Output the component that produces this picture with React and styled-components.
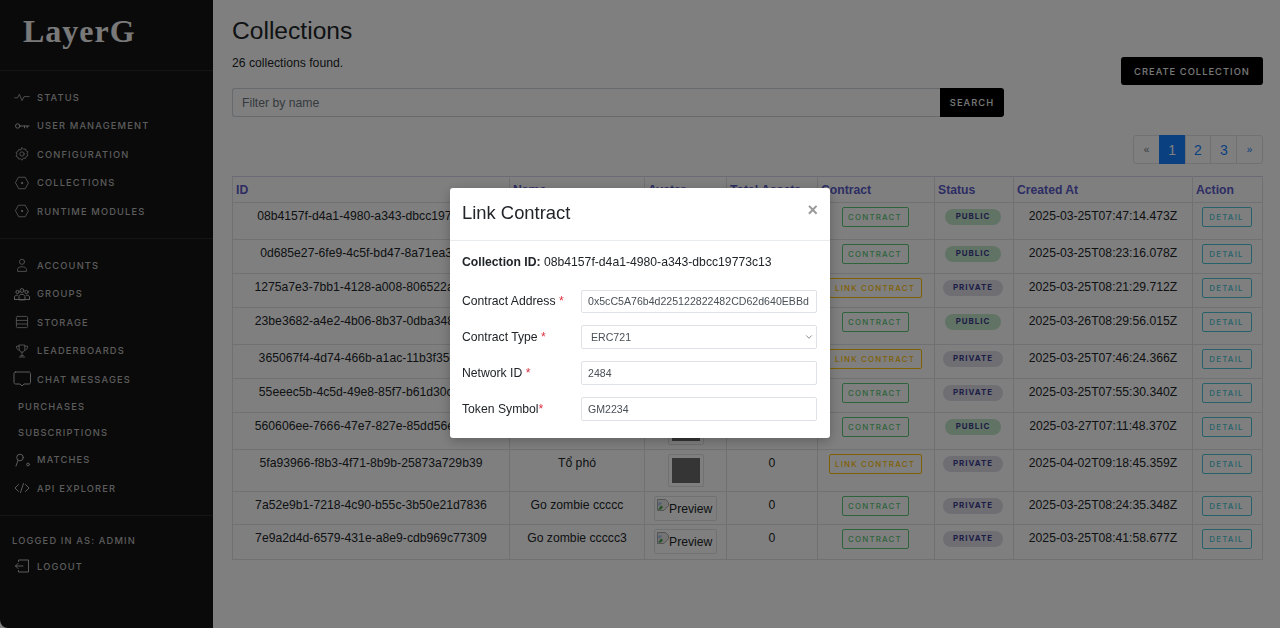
import React from 'react';
import styled, { createGlobalStyle } from 'styled-components';
import { ChevronDown } from 'lucide-react';

const Global = createGlobalStyle`
  html, body { margin: 0; padding: 0; height: 100%; background: #fff; overflow: hidden; }
  body { font-family: "Liberation Sans", Arial, sans-serif; color: #212529; font-size: 12.2px; }
  * { box-sizing: border-box; }
`;

const Shell = styled.div`
  display: flex;
  width: 1280px;
  height: 628px;
  overflow: hidden;
  background: #fff;
`;

const Sidebar = styled.aside`
  width: 213px;
  flex: none;
  background: #151515;
  color: #b8b8b8;
  display: flex;
  flex-direction: column;
  border-bottom-left-radius: 8px;
`;

const Brand = styled.div`
  height: 71px;
  padding: 13px 0 0 23px;
  border-bottom: 1px solid #2a2a2a;
  font-family: "Liberation Serif", serif;
  font-weight: 700;
  font-size: 32px;
  line-height: 36px;
  letter-spacing: 1px;
  color: #f2f2f2;
`;

const NavGroup = styled.nav`
  padding: 12px 0 12.5px;
  border-bottom: 1px solid #2a2a2a;
`;

const NavItem = styled.div`
  height: ${p => (p.$plain ? '26px' : '28.5px')};
  display: flex;
  align-items: center;
  padding-left: ${p => (p.$plain ? '18px' : '12.5px')};
  font-family: Inter, sans-serif;
  font-size: 9.3px;
  font-weight: 500;
  letter-spacing: 1.15px;
  white-space: nowrap;
`;

const NavIcon = styled.svg`
  width: 18px;
  height: 18px;
  margin-right: 6.5px;
  flex: none;
  fill: none;
  stroke: currentColor;
  stroke-width: 1;
  stroke-linecap: round;
  stroke-linejoin: round;
`;

const Footer = styled.div`
  padding-top: 12px;
`;

const LoggedIn = styled.div`
  height: 24px;
  display: flex;
  align-items: center;
  padding-left: 12px;
  font-family: Inter, sans-serif;
  font-size: 9.3px;
  font-weight: 500;
  letter-spacing: 1.15px;
`;

const Main = styled.main`
  flex: 1;
  padding: 0 18px 0 19px;
  background: #fff;
`;

const TopRow = styled.div`
  display: flex;
  justify-content: space-between;
  align-items: flex-start;
  height: 135px;
`;

const TopLeft = styled.div`
  width: 772px;
  padding-top: 16px;
`;

const Title = styled.h1`
  margin: 0;
  font-size: 24.6px;
  font-weight: 400;
  line-height: 30px;
`;

const Count = styled.p`
  margin: 9px 0 0;
  font-size: 12.2px;
  line-height: 16px;
`;

const SearchRow = styled.div`
  display: flex;
  margin-top: 17px;
  height: 29px;
`;

const FilterInput = styled.input`
  flex: 1;
  min-width: 0;
  border: 1px solid #ced4da;
  border-right: 0;
  border-radius: 3px 0 0 3px;
  padding: 0 9px;
  font: 12.2px "Liberation Sans", Arial, sans-serif;
  background: #fff;
  &::placeholder { color: #6c757d; opacity: 1; }
`;

const DarkButton = styled.button`
  border: 0;
  background: #000;
  color: #f0f0f0;
  font-family: Inter, sans-serif;
  font-size: 9.3px;
  font-weight: 500;
  letter-spacing: 1.05px;
  padding: 0;
  white-space: nowrap;
`;

const SearchButton = styled(DarkButton)`
  width: 64px;
  border-radius: 0 3px 3px 0;
`;

const CreateButton = styled(DarkButton)`
  width: 142px;
  height: 28px;
  margin-top: 57px;
  border-radius: 3px;
`;

const PagerRow = styled.div`
  display: flex;
  justify-content: flex-end;
  height: 41px;
`;

const Pager = styled.ul`
  display: flex;
  list-style: none;
  margin: 0;
  padding: 0;
  height: 29px;
`;

const PageCell = styled.li`
  width: 26.8px;
  display: flex;
  align-items: center;
  justify-content: center;
  border: 1px solid ${p => (p.$active ? '#1480ff' : '#dee2e6')};
  margin-left: -1px;
  background: ${p => (p.$active ? '#1480ff' : '#fff')};
  color: ${p => (p.$active ? '#fff' : p.$muted ? '#6c757d' : '#1480ff')};
  font-size: ${p => (p.$small ? '10px' : '14px')};
  &:first-child { border-radius: 3px 0 0 3px; margin-left: 0; }
  &:last-child { border-radius: 0 3px 3px 0; }
`;

const Table = styled.table`
  width: 1030px;
  table-layout: fixed;
  border-collapse: collapse;
  font-size: 12.2px;
`;

const Th = styled.th`
  border: 1px solid #dee2e6;
  border-top-color: #d6d6ee;
  height: 26px;
  padding: 0 3px;
  text-align: left;
  font-weight: 700;
  color: #5a5ac8;
  line-height: 14px;
`;

const Td = styled.td`
  border: 1px solid #dee2e6;
  padding: 6px 4px 0;
  vertical-align: top;
  text-align: center;
  line-height: 15px;
  white-space: nowrap;
  overflow: hidden;
`;

const ActionCell = styled(Td)`
  padding: 4px 5px 0 3px;
`;

const Outline = styled.button`
  display: block;
  margin: 0 auto;
  height: 19.5px;
  width: ${p => p.$w}px;
  padding: 0;
  background: transparent;
  border: 1px solid ${p => p.$c};
  border-radius: 2px;
  color: ${p => p.$c};
  font-family: Inter, sans-serif;
  font-size: 7.9px;
  font-weight: 500;
  letter-spacing: 1.2px;
  white-space: nowrap;
`;

const Badge = styled.span`
  display: block;
  margin: 2px auto 0;
  height: 15.5px;
  line-height: 15.5px;
  width: ${p => (p.$public ? '56px' : '60px')};
  border-radius: 8px;
  background: ${p => (p.$public ? '#c3e6cb' : '#dcdde6')};
  color: #3a3a8c;
  font-family: Inter, sans-serif;
  font-size: 7.9px;
  font-weight: 700;
  letter-spacing: 1px;
  text-align: center;
`;

const Thumb = styled.div`
  display: block;
  width: 36px;
  height: ${p => p.$h}px;
  padding: 3px;
  border: 1px solid #dee2e6;
  border-radius: 2px;
  margin: -2px auto 0;
`;

const ThumbFill = styled.div`
  width: 100%;
  height: 100%;
  background: #6a6a6a;
`;

const Broken = styled.div`
  display: flex;
  align-items: flex-start;
  width: 63px;
  height: 25px;
  padding: 2px;
  border: 1px solid #dee2e6;
  border-radius: 2px;
  margin: -2px auto 0;
  font-size: 12.2px;
  line-height: 20px;
`;

const Overlay = styled.div`
  position: fixed;
  inset: 0;
  background: rgba(0, 0, 0, 0.5);
`;

const Modal = styled.div`
  position: fixed;
  left: 450px;
  top: 188px;
  width: 380px;
  height: 250px;
  background: #fff;
  border-radius: 3px;
  box-shadow: 0 3px 12px rgba(0, 0, 0, 0.25);
`;

const ModalHead = styled.div`
  height: 52.5px;
  padding: 0 12px;
  border-bottom: 1px solid #e9ecef;
  display: flex;
  justify-content: space-between;
  align-items: flex-start;
`;

const ModalTitle = styled.h2`
  margin: 13px 0 0;
  font-size: 18.4px;
  line-height: 24px;
  font-weight: 400;
  color: #212529;
`;

const Close = styled.span`
  margin-top: 10px;
  font-size: 18px;
  line-height: 24px;
  font-weight: 700;
  color: #9a9a9a;
`;

const ModalBody = styled.div`
  padding: 13px 12px 0;
`;

const IdLine = styled.div`
  line-height: 16px;
  margin-bottom: 20px;
  b { font-weight: 700; }
`;

const FormRow = styled.div`
  display: grid;
  grid-template-columns: 119px 236px;
  align-items: center;
  height: 23.5px;
  margin-bottom: 12.4px;
`;

const Label = styled.label`
  font-size: 12.2px;
  color: #212529;
`;

const Req = styled.span`
  color: #dc3545;
`;

const Field = styled.input`
  width: 236px;
  height: 23.5px;
  border: 1px solid #dee2e6;
  border-radius: 2px;
  padding: 0 6px;
  color: #495057;
  background: #fff;
  font: 10.6px "Liberation Sans", Arial, sans-serif;
  outline: none;
`;

const SelectWrap = styled.div`
  position: relative;
  width: 236px;
  color: #6c757d;
  svg { position: absolute; right: 3px; top: 6.5px; }
`;

const SelectField = styled.select`
  display: block;
  width: 236px;
  height: 23.5px;
  appearance: none;
  border: 1px solid #dee2e6;
  border-radius: 2px;
  padding: 0 9px;
  background: #fff;
  color: #495057;
  font: 10.6px "Liberation Sans", Arial, sans-serif;
`;

const small = 'translate(1.8 1.8) scale(.8)';

const icons = {
  status: <g transform={small}><path d="M0 10h3.500l2.200-4.500 3.300 8 2.500-5h6.500" /></g>,
  key: <><circle cx="4.700" cy="9" r="2.200" /><path d="M6.900 9h9.100M11.500 9v1.800M14.200 9v1.800" /></>,
  gear: <g transform={small}><path d="M9 1.200l1.800 1.900 2.500-.4.800 2.400 2.300 1.100-1 2.400 1 2.400-2.300 1.100-.8 2.400-2.500-.4L9 16.800l-1.800-1.900-2.500.4-.8-2.400-2.300-1.100 1-2.400-1-2.400 2.300-1.100.8-2.400 2.500.4z" /><circle cx="9" cy="9" r="2.700" /></g>,
  hex: <g transform={small}><path d="M5 1.800h8L17 9l-4 7.200H5L1 9z" /><circle cx="9" cy="9" r=".8" fill="currentColor" /></g>,
  user: <g transform={small}><circle cx="9" cy="5" r="3.200" /><path d="M3.500 16.500v-2c0-2 2-3.300 5.500-3.300s5.500 1.300 5.500 3.300v2z" /></g>,
  groups: <><circle cx="9" cy="5.500" r="1.900" /><circle cx="4.500" cy="7" r="1.600" /><circle cx="13.500" cy="7" r="1.600" /><path d="M6 14.500v-3c0-1.300 1.300-2.200 3-2.200s3 .9 3 2.200v3zM1.500 14.500v-2.500c0-1.100 1.100-1.800 3-1.800M16.500 14.500v-2.500c0-1.100-1.100-1.800-3-1.800M1.500 14.500h15" /></>,
  storage: <g transform={small}><rect x="2" y="2" width="14" height="14" rx="1.500" /><path d="M2 7h14M2 11.500h14" /></g>,
  trophy: <g transform={small}><path d="M5.500 1.500h7v5.500c0 2-1.500 3.500-3.500 3.500S5.500 9 5.500 7zM5.500 3H2c0 3 1.300 4.800 3.800 5M12.500 3H16c0 3-1.300 4.800-3.800 5M9 10.500V15M5.500 16.500h7M7 15h4" /></g>,
  chat: <path d="M2.500 2h13.500c.8 0 1.500.7 1.500 1.500v9c0 .8-.7 1.500-1.500 1.500h-5L9 16l-2-2H2.500c-.8 0-1.500-.7-1.500-1.500v-9C1 2.700 1.700 2 2.500 2z" />,
  matches: <><circle cx="7" cy="6.500" r="3.300" /><path d="M5 9.500L3 15" /><circle cx="15" cy="13.500" r="1.400" /></>,
  code: <path d="M5.500 5.500L2 9l3.500 3.500M12.500 5.500L16 9l-3.500 3.500M10.500 4.500l-3 9" />,
  logout: <path d="M5.500 4.500V3h10v12h-10v-1.500M10 9H2.500M5 6.500L2.500 9 5 11.500" />,
};

const Icon = ({ name }) => <NavIcon viewBox="0 0 18 18">{icons[name]}</NavIcon>;

const Item = ({ icon, children }) => (
  <NavItem>
    <Icon name={icon} />
    {children}
  </NavItem>
);

const BrokenIcon = () => (
  <svg width="12" height="12" viewBox="0 0 12 12" style={{ flex: 'none' }}>
    <path d="M.5.500h8l3 3v3L7 11.500H.5z" fill="#e8e8ea" stroke="#a8a8a8" />
    <path d="M1 10.500l3-4 2 1.500-2 2.500z" fill="#4aa34a" />
    <path d="M1 5c1-2 3-2 4-1L2 7z" fill="#9ec3ee" />
  </svg>
);

const rows = [
  { id: '08b4157f-d4a1-4980-a343-dbcc19773c13', h: 37, linked: true, pub: true, at: '2025-03-25T07:47:14.473Z' },
  { id: '0d685e27-6fe9-4c5f-bd47-8a71ea3f1c02', h: 34, linked: true, pub: true, at: '2025-03-25T08:23:16.078Z' },
  { id: '1275a7e3-7bb1-4128-a008-806522a4d9e1', h: 34, linked: false, pub: false, at: '2025-03-25T08:21:29.712Z' },
  { id: '23be3682-a4e2-4b06-8b37-0dba348c7a15', h: 37, linked: true, pub: true, at: '2025-03-26T08:29:56.015Z' },
  { id: '365067f4-4d74-466b-a1ac-11b3f35e02d8', h: 34, linked: false, pub: false, at: '2025-03-25T07:46:24.366Z' },
  { id: '55eeec5b-4c5d-49e8-85f7-b61d30c9a6f4', h: 34, linked: true, pub: false, at: '2025-03-25T07:55:30.340Z' },
  { id: '560606ee-7666-47e7-827e-85dd56e1b3c7', h: 37, linked: true, pub: true, at: '2025-03-27T07:11:48.370Z', avatar: 'short' },
  { id: '5fa93966-f8b3-4f71-8b9b-25873a729b39', h: 42, linked: false, pub: false, at: '2025-04-02T09:18:45.359Z', name: 'Tổ phó', total: '0', avatar: 'thumb' },
  { id: '7a52e9b1-7218-4c90-b55c-3b50e21d7836', h: 33, linked: true, pub: false, at: '2025-03-25T08:24:35.348Z', name: 'Go zombie ccccc', total: '0', avatar: 'broken' },
  { id: '7e9a2d4d-6579-431e-a8e9-cdb969c77309', h: 35, linked: true, pub: false, at: '2025-03-25T08:41:58.677Z', name: 'Go zombie ccccc3', total: '0', avatar: 'broken' },
];

const colWidths = [277, 135, 82, 91, 117, 79, 179, 70];
const heads = ['ID', 'Name', 'Avatar', 'Total Assets', 'Contract', 'Status', 'Created At', 'Action'];

export default function App() {
  return (
    <Shell>
      <Global />
      <Sidebar>
        <Brand>LayerG</Brand>
        <NavGroup>
          <Item icon="status">STATUS</Item>
          <Item icon="key">USER MANAGEMENT</Item>
          <Item icon="gear">CONFIGURATION</Item>
          <Item icon="hex">COLLECTIONS</Item>
          <Item icon="hex">RUNTIME MODULES</Item>
        </NavGroup>
        <NavGroup>
          <Item icon="user">ACCOUNTS</Item>
          <Item icon="groups">GROUPS</Item>
          <Item icon="storage">STORAGE</Item>
          <Item icon="trophy">LEADERBOARDS</Item>
          <Item icon="chat">CHAT MESSAGES</Item>
          <NavItem $plain>PURCHASES</NavItem>
          <NavItem $plain>SUBSCRIPTIONS</NavItem>
          <Item icon="matches">MATCHES</Item>
          <Item icon="code">API EXPLORER</Item>
        </NavGroup>
        <Footer>
          <LoggedIn>LOGGED IN AS: ADMIN</LoggedIn>
          <Item icon="logout">LOGOUT</Item>
        </Footer>
      </Sidebar>
      <Main>
        <TopRow>
          <TopLeft>
            <Title>Collections</Title>
            <Count>26 collections found.</Count>
            <SearchRow>
              <FilterInput placeholder="Filter by name" />
              <SearchButton>SEARCH</SearchButton>
            </SearchRow>
          </TopLeft>
          <CreateButton>CREATE COLLECTION</CreateButton>
        </TopRow>
        <PagerRow>
          <Pager>
            <PageCell $muted $small>«</PageCell>
            <PageCell $active>1</PageCell>
            <PageCell>2</PageCell>
            <PageCell>3</PageCell>
            <PageCell $small>»</PageCell>
          </Pager>
        </PagerRow>
        <Table>
          <colgroup>
            {colWidths.map((w, i) => <col key={i} width={w} />)}
          </colgroup>
          <thead>
            <tr>{heads.map(h => <Th key={h}>{h}</Th>)}</tr>
          </thead>
          <tbody>
            {rows.map(r => (
              <tr key={r.id} style={{ height: r.h }}>
                <Td>{r.id}</Td>
                <Td>{r.name}</Td>
                <Td>
                  {r.avatar === 'thumb' && <Thumb $h={33}><ThumbFill /></Thumb>}
                  {r.avatar === 'short' && <Thumb $h={28}><ThumbFill /></Thumb>}
                  {r.avatar === 'broken' && <Broken><BrokenIcon />Preview</Broken>}
                </Td>
                <Td>{r.total}</Td>
                <ActionCell>
                  {r.linked
                    ? <Outline $c="#5cc878" $w={67}>CONTRACT</Outline>
                    : <Outline $c="#ffc107" $w={93}>LINK CONTRACT</Outline>}
                </ActionCell>
                <ActionCell>
                  <Badge $public={r.pub}>{r.pub ? 'PUBLIC' : 'PRIVATE'}</Badge>
                </ActionCell>
                <Td>{r.at}</Td>
                <ActionCell>
                  <Outline $c="#4fc5d5" $w={50}>DETAIL</Outline>
                </ActionCell>
              </tr>
            ))}
          </tbody>
        </Table>
      </Main>
      <Overlay />
      <Modal>
        <ModalHead>
          <ModalTitle>Link Contract</ModalTitle>
          <Close>×</Close>
        </ModalHead>
        <ModalBody>
          <IdLine><b>Collection ID:</b> 08b4157f-d4a1-4980-a343-dbcc19773c13</IdLine>
          <FormRow>
            <Label>Contract Address <Req>*</Req></Label>
            <Field readOnly value="0x5cC5A76b4d225122822482CD62d640EBBd" />
          </FormRow>
          <FormRow>
            <Label>Contract Type <Req>*</Req></Label>
            <SelectWrap>
              <SelectField defaultValue="ERC721">
                <option>ERC721</option>
                <option>ERC1155</option>
              </SelectField>
              <ChevronDown size={10} />
            </SelectWrap>
          </FormRow>
          <FormRow>
            <Label>Network ID <Req>*</Req></Label>
            <Field readOnly value="2484" />
          </FormRow>
          <FormRow>
            <Label>Token Symbol<Req>*</Req></Label>
            <Field readOnly value="GM2234" />
          </FormRow>
        </ModalBody>
      </Modal>
    </Shell>
  );
}
